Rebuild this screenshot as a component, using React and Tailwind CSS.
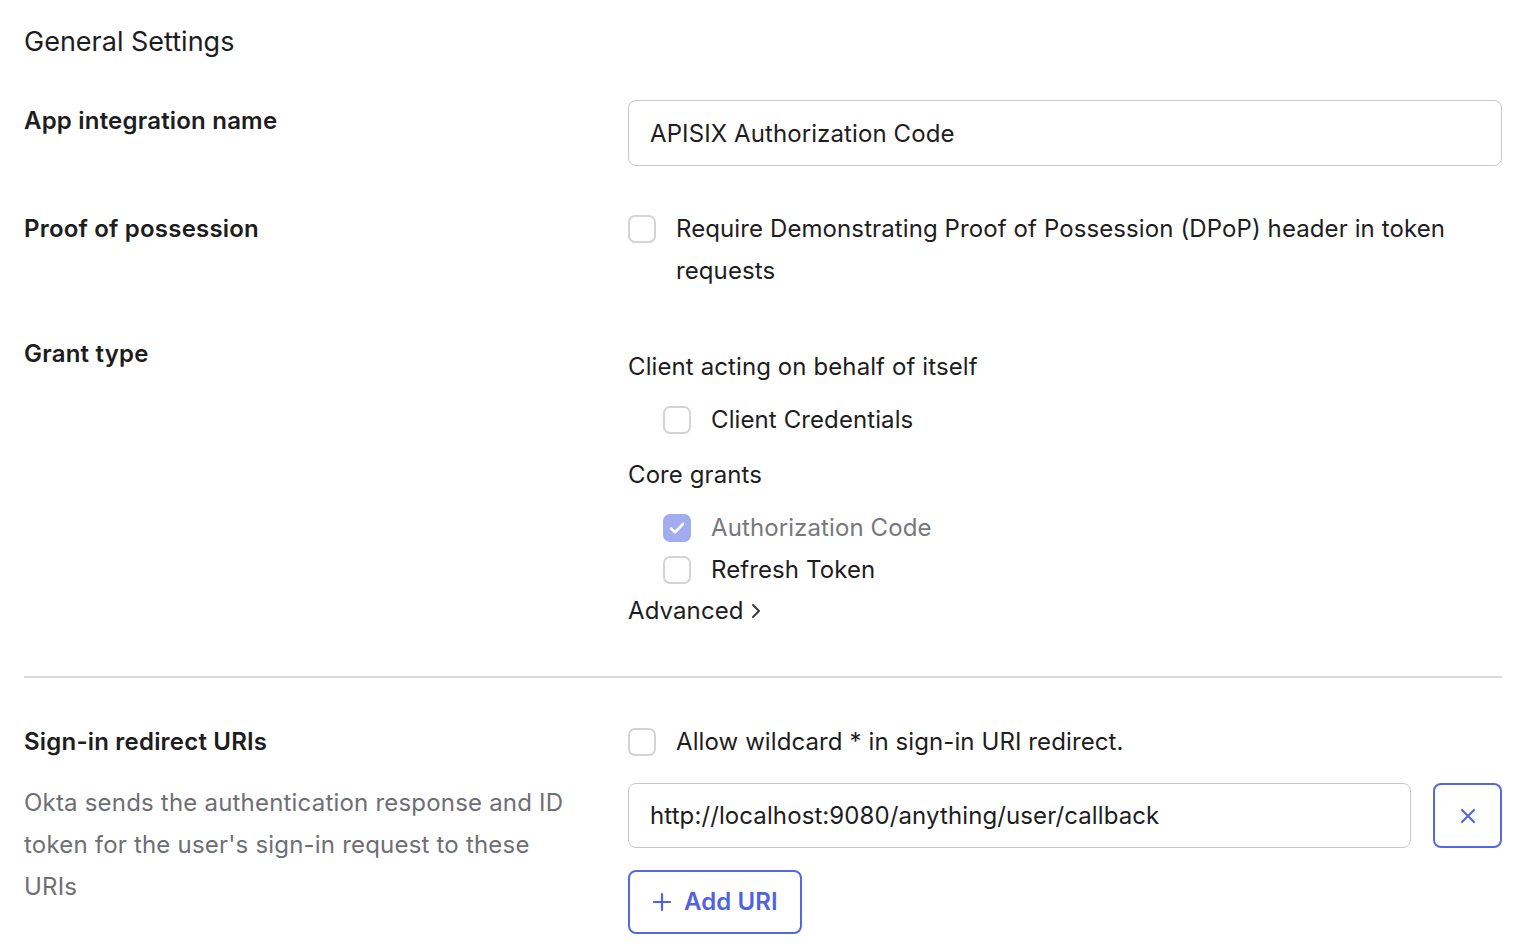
import React from "react";

const font = { fontFamily: "Inter, 'Noto Sans', sans-serif" };

function Box({ checked }) {
  if (checked) {
    return (
      <span className="flex h-[28px] w-[28px] shrink-0 items-center justify-center rounded-[7px] bg-[#a3acef]">
        <svg width="20" height="20" viewBox="0 0 20 20" fill="none">
          <path d="M4 10.5l4 3.8L16 6" stroke="#fff" strokeWidth="2.6" strokeLinecap="round" strokeLinejoin="round" />
        </svg>
      </span>
    );
  }
  return <span className="block h-[28px] w-[28px] shrink-0 rounded-[7px] border-[2.5px] border-[#d4d4d6] bg-white" />;
}

function Label({ children }) {
  return <div className="text-[24px] font-semibold leading-[42px] tracking-[0.2px] text-[#1d1d21]">{children}</div>;
}

export default function App() {
  return (
    <div style={font} className="min-h-[947px] w-[1536px] overflow-hidden bg-white pl-[24px] pr-[34px] tracking-[0.1px] text-[#1d1d21]">
      <h1 className="pt-[22px] text-[27px] font-normal leading-[40px] tracking-[0px] text-[#1d1d21]">General Settings</h1>

      <div className="mt-[38px] grid grid-cols-[604px_1fr]">
        <div><Label>App integration name</Label></div>
        <div className="flex h-[66px] items-center rounded-[8px] border border-[#c7c7c9] px-[21px] pt-[2px] text-[24px] text-[#1d1d21]">
          APISIX Authorization Code
        </div>
      </div>

      <div className="mt-[42px] grid grid-cols-[604px_1fr]">
        <Label>Proof of possession</Label>
        <div className="flex items-start gap-[20px]">
          <div className="flex h-[42px] items-center"><Box /></div>
          <div className="text-[24px] leading-[42px] text-[#1d1d21]">
            Require Demonstrating Proof of Possession (DPoP) header in token<br />requests
          </div>
        </div>
      </div>

      <div className="mt-[41px] grid grid-cols-[604px_1fr]">
        <Label>Grant type</Label>
        <div className="pt-[13px] text-[24px] leading-[42px]">
          <div>Client acting on behalf of itself</div>
          <div className="mt-[11px] flex items-center gap-[20px] pl-[35px]">
            <Box /><span>Client Credentials</span>
          </div>
          <div className="mt-[13px]">Core grants</div>
          <div className="mt-[11px] flex items-center gap-[20px] pl-[35px]">
            <Box checked /><span className="text-[#77777d]">Authorization Code</span>
          </div>
          <div className="flex items-center gap-[20px] pl-[35px]">
            <Box /><span>Refresh Token</span>
          </div>
          <div className="-mt-[1px] flex items-center gap-[4px]">
            <span>Advanced</span>
            <svg width="16" height="20" viewBox="0 0 16 20" fill="none">
              <path d="M5 4l6 6-6 6" stroke="#3a3a40" strokeWidth="2" strokeLinecap="round" strokeLinejoin="round" />
            </svg>
          </div>
        </div>
      </div>

      <div className="mt-[44px] h-[2px] bg-[#d7d7dc]" />

      <div className="mt-[43px] grid grid-cols-[604px_1fr]">
        <div>
          <Label>Sign-in redirect URIs</Label>
          <p className="mt-[19px] max-w-[560px] text-[24px] leading-[42px] tracking-[0.2px] text-[#6e6e76]">
            Okta sends the authentication response and ID token for the user's sign-in request to these URIs
          </p>
        </div>
        <div className="text-[24px]">
          <div className="flex h-[42px] items-center gap-[20px]">
            <Box /><span>Allow wildcard * in sign-in URI redirect.</span>
          </div>
          <div className="mt-[20px] flex gap-[22px]">
            <div className="flex h-[65px] flex-1 items-center rounded-[8px] border border-[#c7c7c9] px-[21px]">
              http://localhost:9080/anything/user/callback
            </div>
            <button className="flex h-[65px] w-[69px] items-center justify-center rounded-[8px] border-2 border-[#5468e0] bg-white">
              <svg width="18" height="18" viewBox="0 0 18 18" fill="none">
                <path d="M3 3l12 12M15 3L3 15" stroke="#5468e0" strokeWidth="2.2" strokeLinecap="round" />
              </svg>
            </button>
          </div>
          <button className="mt-[22px] flex h-[64px] items-center gap-[12px] rounded-[8px] border-2 border-[#5468e0] bg-white pl-[22px] pr-[22px] text-[24px] font-semibold text-[#4f63de]">
            <svg width="20" height="20" viewBox="0 0 20 20" fill="none">
              <path d="M10 2v16M2 10h16" stroke="#4f63de" strokeWidth="2.2" strokeLinecap="round" />
            </svg>
            Add URI
          </button>
        </div>
      </div>
    </div>
  );
}
